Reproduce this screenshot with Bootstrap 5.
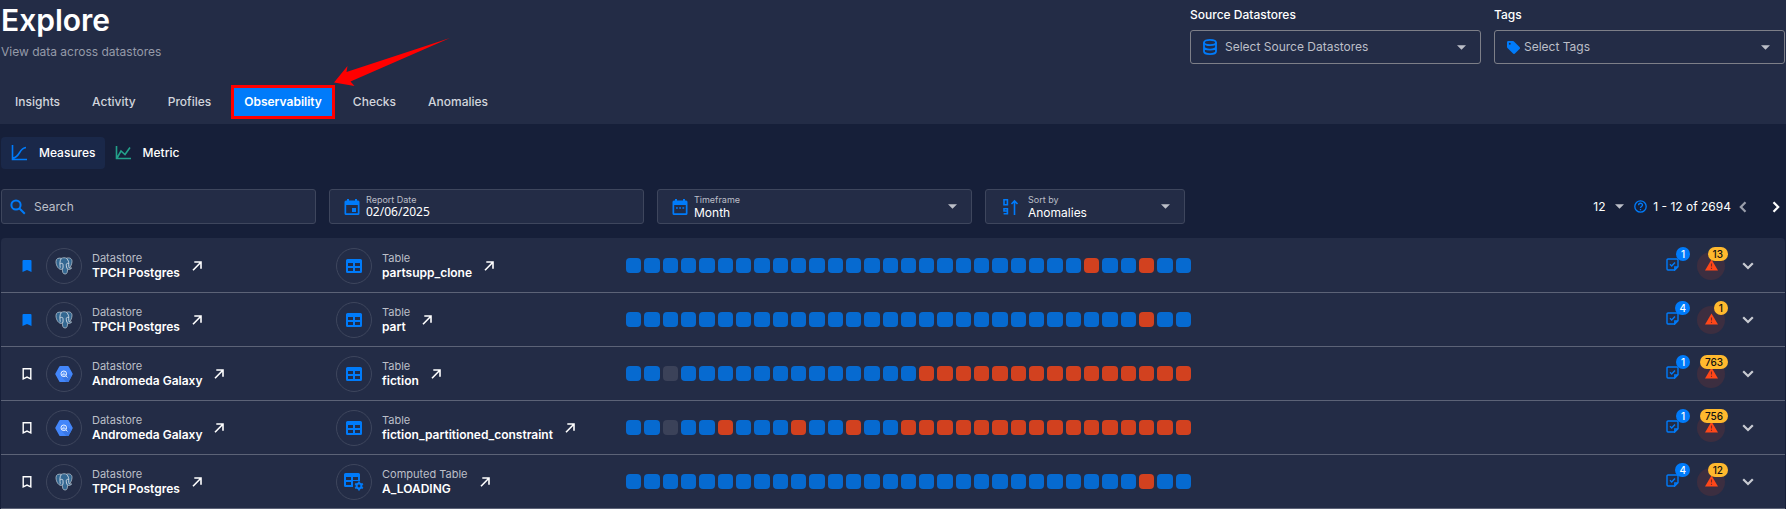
<!DOCTYPE html>
<html lang="en">
<head>
<meta charset="utf-8">
<meta name="viewport" content="width=device-width, initial-scale=1">
<title>Explore</title>
<link href="https://cdn.jsdelivr.net/npm/bootstrap@5.3.0/dist/css/bootstrap.min.css" rel="stylesheet">
<style>
:root{--panel:#232c46;--page:#161f39;--accent:#007bfa;--line:#3e465d;--muted:#bcbfc8;
 --caret:url("data:image/svg+xml,%3Csvg xmlns='http://www.w3.org/2000/svg' viewBox='0 0 10 5'%3E%3Cpath fill='%23bcbfc8' d='M0 0h10L5 5z'/%3E%3C/svg%3E")}
body{background:var(--page);color:#fff;font-family:"Inter","Liberation Sans",sans-serif;font-size:12px;line-height:16px}
svg{display:block;flex:none}

/* header */
.top-panel{background:var(--panel);min-height:124px}
.page-title{font-size:30px;line-height:36px;font-weight:600;padding:2px 0 0 1px}
.sub{color:#959aa8;padding:6px 0 0 1px}
.head-filters{gap:13px;padding:7px 1px 0 0}
.head-filter{width:291px;font-weight:500}
.head-filter label{margin-bottom:7px}
.tabs{gap:4px;padding-left:1px;margin-bottom:5px}
.tabs .nav-link{color:#d2d5dc;font-weight:500;font-size:12px;line-height:16px;padding:6px 11px;border:3px solid transparent;border-radius:0}
.tabs .nav-link.active{background:var(--accent);color:#fff;border-color:#f00;font-weight:600;padding:6px 10px;margin-left:2px}
.pointer{left:333px;top:37px}

/* fields */
.pick{border:1px solid var(--line);border-radius:3px;background-color:var(--panel);height:35px}
.head-filter .pick{border-color:#7d7f88;height:34px}
.pick .form-select,.pick .form-control{background-color:transparent;border:0;border-radius:0;box-shadow:none;color:#fff;font-size:12px;line-height:14px;min-height:0;padding:0}
.pick .form-select{background-image:var(--caret);background-position:right 14px center;background-size:9px 5px;height:100%}
.pick .form-select option{color:#000}
.head-filter .form-select{color:var(--muted)}
.pick .form-control::placeholder{color:var(--muted);opacity:1}
.pick label{font-size:9px;line-height:11px;color:var(--muted)}
.pick .date-in{font-family:"Noto Sans",sans-serif}
.stacked{position:relative;height:100%}
.stacked .form-select{padding-top:12px}
.stacked label{position:absolute;left:0;top:4px;pointer-events:none}
.date-ic{margin:0 6px 0 14px}
.sort-ic{margin:0 9px 0 17px}

/* toolbar */
.mode-bar{padding:13px 0 0 1px;margin-bottom:20px}
.mode{border:0;border-radius:4px;background:transparent;color:#fff;height:32px;font-weight:500;padding:0 9px 0 10px}
.mode.on{background:#1a2849}
.tools{gap:13px;padding:0 6px 0 1px;margin-bottom:14px}
.w-wide{flex:0 0 315px}
.w-sort{flex:0 0 200px}
.pager button,.row-open,.mark-btn{border:0;background:transparent;padding:0;color:inherit}
.per-page{appearance:none;border:0;color:#fff;background:var(--caret) right center/9px 5px no-repeat;width:31px;padding:0}
.per-page option{color:#000}
.help{margin:0 6px 0 10px}
.range{margin-right:8px}
.pager .next{margin-left:25px}

/* asset list */
.assets{background:var(--panel);border-radius:4px 4px 0 0;padding-top:1px;margin:0 1px}
.asset{height:54px;border-bottom:1px solid #5c6377;padding:0 31px 0 21px}
.mark-btn{width:24px;color:#fff}
.ring{width:36px;height:36px;border:1px solid var(--line);border-radius:50%;flex:none}
.ring-text{margin-left:10px}
.kind{font-size:11px;line-height:14px;color:var(--muted)}
.asset-name{line-height:16px;font-weight:600;white-space:nowrap}
.go{margin-left:12px}
.asset-part{width:290px;flex:none}
.days{display:grid;grid-template-columns:repeat(31,1fr);gap:3px;width:565px;flex:none}
.days i{height:15px;border-radius:4px;background:#066ad0}
.days .bad{background:#d2411f}
.days .none{background:#3b4259}
.cell{position:relative;height:28px}
.checks-cell{width:24px}
.checks-cell svg{margin-top:6px}
.pill{position:absolute;right:0;top:-5px;border-radius:8px;height:14px;min-width:14px;line-height:14px;text-align:center;font-size:10px;font-weight:500;padding:0 4px;background:var(--accent)}
.pill.alerts{background:#ffb92e;color:#111;right:-3px;padding:0 5px}
.alert-disc{width:28px;border-radius:50%;background:#3c2e40;margin-left:7px;padding:0 0 2px 8px}
.row-open{margin-left:17px}
</style>
</head>
<body>
<svg width="0" height="0" class="position-absolute" aria-hidden="true">
<symbol id="i-go" viewBox="0 0 10 10"><path d="M1 9.200 8.600 1.500M2.300 1H9v6.700" fill="none" stroke="#fff" stroke-width="1.600"/></symbol>
<symbol id="i-grid" viewBox="0 0 16 14"><path fill="#007bfa" fill-rule="evenodd" d="M1.500 0h13A1.500 1.500 0 0 1 16 1.500v11a1.500 1.500 0 0 1-1.500 1.500h-13A1.500 1.500 0 0 1 0 12.500v-11A1.500 1.500 0 0 1 1.500 0zM2 4v3h5V4zm7 0v3h5V4zM2 9v3h5V9zm7 0v3h5V9z"/></symbol>
<symbol id="i-gridgear" viewBox="0 0 20 18"><path fill="#007bfa" fill-rule="evenodd" d="M1.500 0h13A1.500 1.500 0 0 1 16 1.500V8H9v6H1.500A1.500 1.500 0 0 1 0 12.500v-11A1.500 1.500 0 0 1 1.500 0zM2 4v3h5V4zm7 0v3h5V4zM2 9v3h5V9z"/><circle cx="15" cy="13" r="2.400" fill="none" stroke="#007bfa" stroke-width="2"/><path d="M15 8.500v9M11.100 10.700l7.800 4.600M11.100 15.300l7.800-4.600" stroke="#007bfa" stroke-width="1.800"/><circle cx="15" cy="13" r="1.400" fill="#232c46"/></symbol>
<symbol id="i-pg" viewBox="0 0 18 18"><path d="M1 4.500C1 1.500 3.500.7 6.300 1.300 8 .6 10 .6 11.500 1.200 14 .4 17 1 17 4.300c0 2.500-1.300 5.500-2.500 6.700h2.200c-.9 1.300-2.600 1.600-4.100 1.300-.2 2.500-.3 4.700-2.500 4.700-2.600 0-2.600-2.500-2.700-4.900C4 13.600 1 9 1 4.500z" fill="#336791" stroke="#b4c0cc" stroke-width=".8"/><path d="M6.300 1.500C4.300 4 5 8 5.200 10.800M11.500 1.300c1.900 2 2.500 4 2.200 6-.2 1.300.2 2.600.5 3.600M7.500 12c.8-1.200.6-2.600.5-4.300.1-1.500-1.500-1.700-2.700-1M13.600 6.500c-1-.4-2.200-.2-2.300 1-.1 1.800.3 3.200 1.300 4.700" fill="none" stroke="#d5dde6" stroke-width=".9"/></symbol>
<symbol id="i-bq" viewBox="0 0 18 18"><path fill="#4386fa" d="M5.200 1h7.600a1 1 0 0 1 .9.500l3.900 7a1 1 0 0 1 0 1l-3.900 7a1 1 0 0 1-.9.500H5.200a1 1 0 0 1-.9-.5l-3.900-7a1 1 0 0 1 0-1l3.900-7a1 1 0 0 1 .9-.5z"/><path fill="#3a78e6" d="m12 7 4.500 4.500-2.800 5a1 1 0 0 1-.9.500h-1.500L7 12.500z"/><circle cx="8.800" cy="8.800" r="2.800" fill="#4386fa" stroke="#fff" stroke-width=".9"/><path d="M7.700 8.700v1.500M8.900 7.500v3M10.100 8.900v1.200M11 11l1.500 1.500" stroke="#fff" stroke-width=".8"/></symbol>
<symbol id="i-check" viewBox="0 0 13 13"><path fill="none" stroke="#007bfa" stroke-width="1.400" d="M8.800 12H2a1 1 0 0 1-1-1V2a1 1 0 0 1 1-1h9a1 1 0 0 1 1 1v6.800L8.800 12V9H12M4 6.300 5.700 8 9 4.600"/></symbol>
<symbol id="i-warn" viewBox="0 0 14 12"><path fill="#ff4719" d="M7 0l7 12H0z"/><path stroke="#7a2b25" stroke-width="1.200" d="M7 4.500v3.200M7 9v1.300"/></symbol>
<symbol id="i-down" viewBox="0 0 12 8"><path fill="none" stroke="#c8cbd2" stroke-width="2.200" d="m1.200 1.200 4.800 4.800 4.800-4.800"/></symbol>
<symbol id="i-mark-on" viewBox="0 0 10 12"><path fill="#007bfa" d="M1.500 0h7A1 1 0 0 1 9.500 1v11L5 10 .5 12V1a1 1 0 0 1 1-1z"/></symbol>
<symbol id="i-mark" viewBox="0 0 10 12"><path fill="none" stroke="#fff" stroke-width="1.400" d="M1.200.8h7.600v10L5 9.100l-3.800 1.700z"/></symbol>
</svg>

<header class="top-panel position-relative d-flex flex-column">
  <div class="d-flex justify-content-between flex-grow-1">
    <div>
      <h1 class="page-title mb-0">Explore</h1>
      <div class="sub">View data across datastores</div>
    </div>
    <div class="d-flex head-filters">
      <div class="head-filter">
        <label class="d-block" for="src">Source Datastores</label>
        <div class="pick d-flex align-items-center ps-2">
          <svg class="ms-1 me-2" width="14" height="16" viewBox="0 0 14 16" fill="none" stroke="#007bfa" stroke-width="1.800"><ellipse cx="7" cy="3.500" rx="6" ry="2.600"/><path d="M1 3.500v9c0 1.400 2.700 2.600 6 2.600s6-1.200 6-2.600v-9M1 8c0 1.400 2.700 2.600 6 2.600S13 9.400 13 8"/></svg>
          <select id="src" class="form-select"><option>Select Source Datastores</option></select>
        </div>
      </div>
      <div class="head-filter">
        <label class="d-block" for="tags">Tags</label>
        <div class="pick d-flex align-items-center ps-2">
          <svg class="ms-1 me-1" width="13" height="13" viewBox="0 0 14 14"><path fill="#007bfa" fill-rule="evenodd" d="M1.500 0h5a1.500 1.500 0 0 1 1 .5l6 6a1.500 1.500 0 0 1 0 2.100l-4.900 4.900a1.500 1.500 0 0 1-2.100 0l-6-6A1.500 1.500 0 0 1 0 6.500v-5A1.500 1.500 0 0 1 1.500 0zM3 2a1 1 0 1 0 0 2 1 1 0 0 0 0-2z"/></svg>
          <select id="tags" class="form-select"><option>Select Tags</option></select>
        </div>
      </div>
    </div>
  </div>
  <nav class="nav tabs" aria-label="Explore sections">
    <a class="nav-link" href="#">Insights</a>
    <a class="nav-link" href="#">Activity</a>
    <a class="nav-link" href="#">Profiles</a>
    <a class="nav-link active" href="#" aria-current="page">Observability</a>
    <a class="nav-link" href="#">Checks</a>
    <a class="nav-link" href="#">Anomalies</a>
  </nav>
  <svg class="pointer position-absolute" width="118" height="50" viewBox="0 0 118 50" aria-hidden="true"><path fill="#f00" d="M117 1 13.500 35 14.500 29 1 45.500 21.500 49 17.500 44.500z"/></svg>
</header>

<main>
  <div class="d-flex mode-bar" role="group" aria-label="View">
    <button type="button" class="mode on d-flex align-items-center"><svg class="me-2" width="16" height="16" viewBox="0 0 16 16" fill="none" stroke="#007bfa" stroke-width="1.600"><path d="M1.500 0v14.500H16M2 13C9 12.500 8 3 15 2.500"/></svg><span class="ps-1">Measures</span></button>
    <button type="button" class="mode d-flex align-items-center"><svg class="me-2" width="16" height="16" viewBox="0 0 16 16" fill="none" stroke="#23a18a" stroke-width="1.600"><path d="M1.500 1v12.500H16M2 13l4-7 4 3.500 5-7"/></svg><span class="ps-1">Metric</span></button>
  </div>

  <div class="d-flex tools align-items-center">
    <div class="pick w-wide d-flex align-items-center ps-2">
      <svg class="me-2" width="16" height="16" viewBox="0 0 16 16" fill="none" stroke="#007bfa" stroke-width="2"><circle cx="6" cy="6" r="4.600"/><path d="m9.500 9.500 5.300 5.300"/></svg>
      <input class="form-control" type="text" placeholder="Search" aria-label="Search">
    </div>
    <div class="pick w-wide d-flex align-items-center">
      <svg class="date-ic" width="16" height="16" viewBox="0 0 16 16"><path fill="#007bfa" fill-rule="evenodd" d="M3 0h2v1.500h6V0h2v1.500h1A1.500 1.500 0 0 1 15.500 3v11.500A1.500 1.500 0 0 1 14 16H2a1.500 1.500 0 0 1-1.500-1.500V3A1.500 1.500 0 0 1 2 1.500h1zM2.200 6v8.300h11.600V6zM8 9h4v4H8z"/></svg>
      <div class="flex-grow-1"><label class="d-block" for="rd">Report Date</label><input id="rd" class="form-control date-in" type="text" value="02/06/2025"></div>
    </div>
    <div class="pick w-wide d-flex align-items-center">
      <svg class="date-ic" width="16" height="16" viewBox="0 0 16 16"><path fill="#007bfa" fill-rule="evenodd" d="M3 0h2v1.500h6V0h2v1.500h1A1.500 1.500 0 0 1 15.500 3v11.500A1.500 1.500 0 0 1 14 16H2a1.500 1.500 0 0 1-1.500-1.500V3A1.500 1.500 0 0 1 2 1.500h1zM2.200 6v8.300h11.600V6z"/><path stroke="#007bfa" stroke-width="1.600" stroke-dasharray="1.800 1.400" d="M4 9h9"/></svg>
      <div class="stacked flex-grow-1"><label for="tf">Timeframe</label><select id="tf" class="form-select"><option>Month</option></select></div>
    </div>
    <div class="pick w-sort d-flex align-items-center">
      <svg class="sort-ic" width="16" height="16" viewBox="0 0 16 16" fill="none" stroke="#007bfa" stroke-width="1.600"><path d="M1 .8h3.400v5H1zM4.400 12H1V9.800h3.400v5H.6M11.500 16V2.500M8.500 5l3-3 3 3"/></svg>
      <div class="stacked flex-grow-1"><label for="sb">Sort by</label><select id="sb" class="form-select"><option>Anomalies</option></select></div>
    </div>
    <div class="pager d-flex align-items-center ms-auto">
      <select class="per-page" aria-label="Rows per page"><option>12</option></select>
      <svg class="help" width="13" height="13" viewBox="0 0 13 13" fill="none" stroke="#007bfa" stroke-width="1.300"><circle cx="6.500" cy="6.500" r="5.700"/><path d="M4.600 5.200c0-2.600 3.900-2.500 3.900-.2 0 1.400-2 1.500-2 3M6.500 9v1.300"/></svg>
      <span class="range">1 - 12 of 2694</span>
      <button type="button" aria-label="Previous page"><svg width="8" height="12" viewBox="0 0 8 12"><path fill="none" stroke="#9a9eab" stroke-width="2.200" d="M6.500 1.200 1.800 6l4.700 4.800"/></svg></button>
      <button type="button" class="next" aria-label="Next page"><svg width="8" height="12" viewBox="0 0 8 12"><path fill="none" stroke="#fff" stroke-width="2.200" d="M1.500 1.200 6.200 6l-4.700 4.800"/></svg></button>
    </div>
  </div>

  <div class="assets" id="assets"></div>
</main>
<script src="https://cdn.jsdelivr.net/npm/bootstrap@5.3.0/dist/js/bootstrap.bundle.min.js"></script>
<script>
const span = (a, b) => Array.from({length: b - a + 1}, (_, i) => a + i);
const assets = [
  {on: true,  db: 'pg', store: 'TPCH Postgres', kind: 'Table', name: 'partsupp_clone', bad: [25, 28], none: [], checks: 1, alerts: 13},
  {on: true,  db: 'pg', store: 'TPCH Postgres', kind: 'Table', name: 'part', bad: [28], none: [], checks: 4, alerts: 1},
  {on: false, db: 'bq', store: 'Andromeda Galaxy', kind: 'Table', name: 'fiction', bad: span(16, 30), none: [2], checks: 1, alerts: 763},
  {on: false, db: 'bq', store: 'Andromeda Galaxy', kind: 'Table', name: 'fiction_partitioned_constraint', bad: [5, 9, 12, ...span(15, 30)], none: [2], checks: 1, alerts: 756},
  {on: false, db: 'pg', store: 'TPCH Postgres', kind: 'Computed Table', name: 'A_LOADING', bad: [28], none: [], checks: 4, alerts: 12}
];
const use = (id, w, h) => `<svg width="${w}" height="${h}" aria-hidden="true"><use href="#i-${id}"/></svg>`;
const block = (icon, kind, name) => `<div class="asset-part d-flex align-items-center">
  <div class="ring d-flex align-items-center justify-content-center">${icon}</div>
  <div class="ring-text"><div class="kind">${kind}</div><div class="asset-name">${name}</div></div>
  <a class="go" href="#" aria-label="Open ${name}">${use('go', 10, 10)}</a></div>`;
document.getElementById('assets').innerHTML = assets.map(a => `<div class="asset d-flex align-items-center">
  <button type="button" class="mark-btn" aria-label="Bookmark">${use(a.on ? 'mark-on' : 'mark', 10, 12)}</button>
  ${block(use(a.db, 18, 18), 'Datastore', a.store)}
  ${block(a.kind === 'Table' ? use('grid', 16, 14) : use('gridgear', 20, 18), a.kind, a.name)}
  <div class="days">${span(0, 30).map(d => `<i class="${a.bad.includes(d) ? 'bad' : a.none.includes(d) ? 'none' : ''}"></i>`).join('')}</div>
  <div class="cell checks-cell ms-auto">${use('check', 13, 13)}<span class="pill">${a.checks}</span></div>
  <div class="cell alert-disc d-flex align-items-center">${use('warn', 13, 12)}<span class="pill alerts">${a.alerts}</span></div>
  <button type="button" class="row-open" aria-label="Expand">${use('down', 12, 8)}</button></div>`).join('');
</script>
</body>
</html>
